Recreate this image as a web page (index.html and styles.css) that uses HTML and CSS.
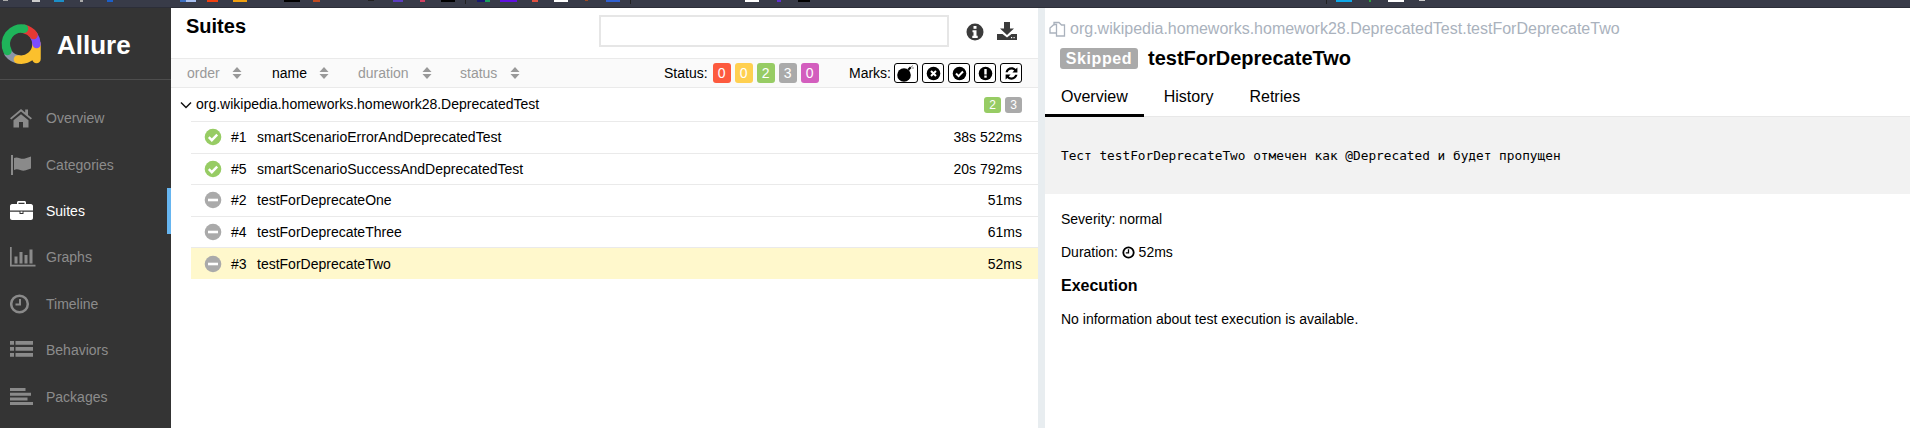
FILE: index.html
```html
<!DOCTYPE html>
<html lang="en">
<head>
<meta charset="utf-8">
<title>Allure</title>
<link rel="stylesheet" href="styles.css">
</head>
<body>
<svg class="defs" width="0" height="0" aria-hidden="true">
  <symbol id="sort" viewBox="0 0 10 12"><path class="sort-up" d="M5 0l4.5 5H.5z"/><path class="sort-down" d="M.5 7h9L5 12z"/></symbol>
  <symbol id="passed" viewBox="0 0 18 18"><circle cx="9" cy="9" r="8.3" fill="#97cc64"/><path d="M4.8 9.2l3 3 5.4-5.6" fill="none" stroke="#fff" stroke-width="2.4"/></symbol>
  <symbol id="skipped" viewBox="0 0 18 18"><circle cx="9" cy="9" r="8.3" fill="#aaa"/><rect x="4" y="7.7" width="10" height="2.6" fill="#fff"/></symbol>
</svg>
<div class="app">
  <div class="topbar">
    <svg class="specks" width="1910" height="8" aria-hidden="true">
      <rect x="3" width="5" height="1" fill="#aaa"/><rect x="32" width="8" height="2" fill="#ccc"/><rect x="54" width="10" height="2" fill="#1c8fc8"/><rect x="80" width="3" height="2" fill="#aaa"/><rect x="107" width="6" height="2" fill="#1c5fc8"/><rect x="180" width="6" height="2" fill="#3d6fc0"/><rect x="186" width="10" height="2" fill="#a8c0f0"/><rect x="207" width="11" height="2" fill="#f0400f"/><rect x="233" width="14" height="2" fill="#f0a010"/><rect x="284" width="16" height="2" fill="#000"/><rect x="313" width="7" height="2" fill="#c04a20"/><rect x="368" width="6" height="1" fill="#222"/><rect x="393" width="10" height="2" fill="#5b3dc0"/><rect x="420" width="5" height="2" fill="#d04060"/><rect x="441" width="14" height="2" fill="#000"/><rect x="465" width="1" height="4" fill="#222"/><rect x="477" width="8" height="2" fill="#1a1a70"/><rect x="485" width="5" height="2" fill="#1aa060"/><rect x="500" width="17" height="2" fill="#6010e0"/><rect x="532" width="6" height="2" fill="#e05040"/><rect x="554" width="14" height="2" fill="#fff"/><rect x="585" width="3" height="1" fill="#a04a20"/><rect x="606" width="14" height="2" fill="#3060d0"/><rect x="630" width="1" height="4" fill="#222"/><rect x="745" width="14" height="2" fill="#fff"/><rect x="777" width="4" height="2" fill="#6030d0"/><rect x="798" width="12" height="2" fill="#000"/><rect x="1326" width="1" height="4" fill="#222"/><rect x="1336" width="16" height="2" fill="#10a8e8"/><rect x="1369" width="2" height="2" fill="#30a040"/><rect x="1388" width="16" height="2" fill="#fff"/><rect x="1419" width="6" height="1" fill="#ccc"/>
    </svg>
  </div>
  <div class="main">
    <aside class="side">
      <div class="brand">
        <svg class="logo" width="42" height="42" viewBox="0 0 42 42" aria-hidden="true">
          <g fill="none" stroke-width="8.5" stroke-linecap="round" stroke-linejoin="round">
            <path stroke="#8d96a8" d="M19 36.4A15.5 15.5 0 0 1 8.5 30.5"/>
            <path stroke="#fbc02d" d="M18 36.4A15.5 15.5 0 0 0 36.5 21V36"/>
            <path stroke="#7c4dff" d="M33.8 12.6A15.5 15.5 0 0 1 36.5 21"/>
            <path stroke="#e53935" d="M24 6A15.5 15.5 0 0 1 33.5 12"/>
            <path stroke="#1fb45a" d="M7.5 28A15.5 15.5 0 0 1 24 5.8"/>
          </g>
        </svg>
        <span class="brand-name">Allure</span>
      </div>
      <nav class="nav">
        <a class="nav-item"><svg class="nav-icon" width="22" height="20" viewBox="0 0 22 20"><path d="M11 1L0 10.2l1.3 1.4L11 3.6l9.7 8 1.3-1.4-4-3.3V1.500h-2.800v3L11 1zM3.500 12.300V19.500h5.500v-5.500h4v5.500h5.500v-7.200L11 6.200z"/></svg><span>Overview</span></a>
        <a class="nav-item"><svg class="nav-icon" width="22" height="20" viewBox="0 0 22 20"><path d="M1 0h2v20H1zM4 3c4-2 7 2 11 .500 2-.800 4-1.500 6-2v12c-2 .500-4 1.500-6 2-4 1-7-3-11-.500z"/></svg><span>Categories</span></a>
        <a class="nav-item active"><svg class="nav-icon" width="23" height="20" viewBox="0 0 23 20"><path d="M7 3V1.500C7 .700 7.700 0 8.500 0h6C15.300 0 16 .700 16 1.500V3h5c1 0 2 1 2 2v4.500H0V5c0-1 1-2 2-2zM8.500 1.700V3h6V1.700zM0 10.800h9.500V13h4v-2.200H23V17c0 1-1 2-2 2H2c-1 0-2-1-2-2zM10.500 10.500h2V12h-2z"/></svg><span>Suites</span></a>
        <a class="nav-item"><svg class="nav-icon" width="26" height="20" viewBox="0 0 26 20"><path d="M0 0h1.700v17.800H25.500v1.700H0zM4.500 9.500h3v7h-3zM9.500 5h3v11.500h-3zM14.500 8h3v8.500h-3zM19.500 2.500h3v14h-3z"/></svg><span>Graphs</span></a>
        <a class="nav-item"><svg class="nav-icon" width="22" height="20" viewBox="0 0 22 20"><circle cx="9.500" cy="10" r="8.300" fill="none" stroke="#8a8a8a" stroke-width="2.500"/><path d="M9 5h2v6.500H5.500v-2H9z"/></svg><span>Timeline</span></a>
        <a class="nav-item"><svg class="nav-icon" width="23" height="20" viewBox="0 0 23 20"><path d="M0 1h4v3.700H0zM5.500 1H23v3.700H5.500zM0 7h4v3.700H0zM5.500 7H23v3.700H5.500zM0 13h4v3.700H0zM5.500 13H23v3.700H5.500z"/></svg><span>Behaviors</span></a>
        <a class="nav-item"><svg class="nav-icon" width="23" height="20" viewBox="0 0 23 20"><path d="M0 1h15.500v3H0zM0 5.700h21v3H0zM0 10.400h17.500v3H0zM0 15.100h23v3H0z"/></svg><span>Packages</span></a>
      </nav>
    </aside>

    <section class="suites">
      <header class="suites-head">
        <h2 class="suites-title">Suites</h2>
        <input class="search" type="text" aria-label="Search">
        <svg class="head-icon info" width="18" height="18" viewBox="0 0 18 18"><circle cx="9" cy="9" r="8.500" fill="#3b3b3b"/><rect x="7.500" y="3" width="3" height="2.800" fill="#fff"/><path d="M6.500 7.200h4v5.500h1.200v2.200H6.300v-2.200h1.200V9.300h-1z" fill="#fff"/></svg>
        <svg class="head-icon download" width="20" height="18" viewBox="0 0 20 18"><path d="M7 0h6v6.500h4L10 13 3 6.500h4z" fill="#3b3b3b"/><path d="M0 12h5.500L10 15.500 14.500 12H20v6H0z" fill="#3b3b3b"/><rect x="14" y="15" width="1.200" height="1.200" fill="#fff"/><rect x="16.500" y="15" width="1.200" height="1.200" fill="#fff"/></svg>
      </header>

      <div class="toolbar">
        <div class="sorters">
          <div class="sorter s-order">order<svg class="sort-icon" width="10" height="12"><use href="#sort"/></svg></div>
          <div class="sorter s-name on">name<svg class="sort-icon" width="10" height="12"><use href="#sort"/></svg></div>
          <div class="sorter s-duration">duration<svg class="sort-icon" width="10" height="12"><use href="#sort"/></svg></div>
          <div class="sorter s-status">status<svg class="sort-icon" width="10" height="12"><use href="#sort"/></svg></div>
        </div>
        <div class="status-filter">
          <span class="filter-label">Status:</span>
          <span class="pill red">0</span><span class="pill yellow">0</span><span class="pill green">2</span><span class="pill grey">3</span><span class="pill pink">0</span>
        </div>
        <div class="marks">
          <span class="filter-label marks-label">Marks:</span>
          <button class="mark wide"><svg width="20" height="18" viewBox="0 0 20 18"><circle cx="8" cy="11" r="6.800" fill="#000"/><path d="M11.500 5l2.500-2.500 1.500 1.500L13 6.500z" fill="#000"/><path d="M15 3l2-1.500M16 4h2" stroke="#888" stroke-width="1"/></svg></button>
          <button class="mark"><svg width="15" height="15" viewBox="0 0 15 15"><circle cx="7.500" cy="7.500" r="6.800" fill="#000"/><path d="M5 5l5 5M10 5l-5 5" stroke="#fff" stroke-width="2"/></svg></button>
          <button class="mark"><svg width="15" height="15" viewBox="0 0 15 15"><circle cx="7.500" cy="7.500" r="6.800" fill="#000"/><path d="M4 7.500l2.600 2.600 4.400-4.600" fill="none" stroke="#fff" stroke-width="2"/></svg></button>
          <button class="mark"><svg width="15" height="15" viewBox="0 0 15 15"><circle cx="7.500" cy="7.500" r="6.800" fill="#000"/><rect x="6.300" y="3" width="2.400" height="5.500" fill="#fff"/><rect x="6.300" y="9.500" width="2.400" height="2.200" fill="#fff"/></svg></button>
          <button class="mark"><svg width="15" height="15" viewBox="0 0 15 15"><path d="M1.500 6.200C2.200 3.200 4.600 1.300 7.500 1.300c1.700 0 3.100.600 4.200 1.700L13.400 1.400v5H8.400l1.800-1.800c-.700-.700-1.700-1.100-2.700-1.100-1.700 0-3.200 1.100-3.700 2.700zM1.600 8.600h5L4.800 10.400c.700.700 1.700 1.100 2.700 1.100 1.700 0 3.200-1.100 3.700-2.700h2.300c-.700 3-3.100 4.900-6 4.900-1.700 0-3.100-.600-4.200-1.700L1.600 13.600z" fill="#000"/></svg></button>
        </div>
      </div>

      <div class="group">
        <svg class="chevron" width="12" height="8" viewBox="0 0 12 8"><path d="M1 1.500l5 5 5-5" fill="none" stroke="#111" stroke-width="1.500"/></svg>
        <span class="group-name">org.wikipedia.homeworks.homework28.DeprecatedTest</span>
        <span class="pill small green">2</span><span class="pill small grey">3</span>
      </div>

      <ul class="rows">
        <li class="row"><svg class="status" width="18" height="18"><use href="#passed"/></svg><span class="num">#1</span><span class="name">smartScenarioErrorAndDeprecatedTest</span><span class="time">38s 522ms</span></li>
        <li class="row"><svg class="status" width="18" height="18"><use href="#passed"/></svg><span class="num">#5</span><span class="name">smartScenarioSuccessAndDeprecatedTest</span><span class="time">20s 792ms</span></li>
        <li class="row"><svg class="status" width="18" height="18"><use href="#skipped"/></svg><span class="num">#2</span><span class="name">testForDeprecateOne</span><span class="time">51ms</span></li>
        <li class="row"><svg class="status" width="18" height="18"><use href="#skipped"/></svg><span class="num">#4</span><span class="name">testForDeprecateThree</span><span class="time">61ms</span></li>
        <li class="row selected"><svg class="status" width="18" height="18"><use href="#skipped"/></svg><span class="num">#3</span><span class="name">testForDeprecateTwo</span><span class="time">52ms</span></li>
      </ul>
    </section>

    <div class="gutter"></div>

    <section class="detail">
      <div class="crumb">
        <svg class="copy" width="17" height="16" viewBox="0 0 17 16"><path d="M5 4.500V1.500h5l2.500 2.500h3v11h-8v-3.500M1 7l4-3.500h2.500V12h-6.500z" fill="none" stroke="#aab2bd" stroke-width="1.300"/></svg>
        <span>org.wikipedia.homeworks.homework28.DeprecatedTest.testForDeprecateTwo</span>
      </div>
      <div class="title-line">
        <span class="badge">Skipped</span>
        <h2 class="test-title">testForDeprecateTwo</h2>
      </div>
      <div class="tabs">
        <a class="tab active">Overview</a>
        <a class="tab">History</a>
        <a class="tab">Retries</a>
      </div>
      <pre class="description">Тест testForDeprecateTwo отмечен как @Deprecated и будет пропущен</pre>
      <div class="info-body">
        <p class="line">Severity: normal</p>
        <p class="line">Duration: <svg class="clock" width="13" height="13" viewBox="0 0 13 13"><circle cx="6.500" cy="6.500" r="5.200" fill="none" stroke="#000" stroke-width="1.800"/><path d="M6.500 3.200v3.600H3.800" fill="none" stroke="#000" stroke-width="1.300"/></svg> 52ms</p>
        <h3 class="section">Execution</h3>
        <p class="line">No information about test execution is available.</p>
      </div>
    </section>
  </div>
</div>
</body>
</html>
```

FILE: styles.css
```css
* { box-sizing: border-box; }
html, body { margin: 0; padding: 0; height: 100%; overflow: hidden; }
body { font-family: "Liberation Sans", Arial, sans-serif; font-size: 14px; color: #000; background: #fff; }
.defs { position: absolute; }
.app { display: flex; flex-direction: column; height: 100vh; }
.topbar { height: 8px; flex: none; background: #383b48; border-bottom: 1px solid #2c2e38; }
.specks { display: block; }
.main { flex: 1; display: flex; min-height: 0; }

.side { width: 171px; flex: none; background: #343434; }
.brand { height: 72px; display: flex; align-items: center; border-bottom: 1px solid #4d4d4d; }
.logo { flex: none; }
.brand-name { margin: 3px 0 0 15px; font-size: 26px; font-weight: 700; color: #fff; }
.nav { margin-top: 15px; display: flex; flex-direction: column; }
.nav-item { height: 46.4px; display: flex; align-items: center; padding-left: 10px; color: #8c8c8c; fill: #8a8a8a; border-right: 4px solid transparent; }
.nav-item span { margin-left: auto; width: 121px; font-size: 14px; }
.nav-icon { flex: none; }
.nav-item.active { color: #fff; fill: #fff; border-right-color: #66b5f0; }

.suites { width: 867px; flex: none; display: flex; flex-direction: column; }
.suites-head { height: 51px; flex: none; display: flex; align-items: flex-start; border-bottom: 1px solid #eaeaea; }
.suites-title { margin: 6px 0 0 15px; width: 413px; font-size: 20px; line-height: 24px; font-weight: 700; }
.search { margin-top: 7px; width: 350px; height: 32px; border: 2px solid #e6e6e6; background: #fff; outline: none; }
.head-icon { flex: none; }
.info { margin: 15px 0 0 17px; }
.download { margin: 14px 0 0 13px; }

.toolbar { height: 29px; flex: none; display: flex; align-items: center; background: #fafafa; border-bottom: 1px solid #eaeaea; }
.sorters { display: flex; align-items: center; width: 478px; }
.sorter { display: flex; align-items: center; justify-content: space-between; color: #999; font-size: 14px; }
.sort-icon { flex: none; }
.sort-up, .sort-down { fill: #999; }
.on { color: #000; }
.on .sort-up { fill: #000; }
.s-order { margin-left: 16px; width: 55px; }
.s-name { margin-left: 30px; width: 57px; }
.s-duration { margin-left: 29px; width: 74px; }
.s-status { margin-left: 28px; width: 60px; }
.status-filter, .marks { display: flex; align-items: center; gap: 4px; }
.status-filter { margin-left: 15px; width: 185px; }
.filter-label { margin-right: 1px; font-size: 14px; }
.filter-label.marks-label { margin-right: -1px; }
.pill { display: block; width: 18px; height: 20px; line-height: 20px; text-align: center; color: #fff; border-radius: 3px; font-size: 14px; }
.red { background: #fd5a3e; }
.yellow { background: #ffd050; }
.green { background: #97cc64; }
.grey { background: #aaa; }
.pink { background: #d35ebe; }
.mark { width: 22px; height: 20px; padding: 0; display: flex; align-items: center; justify-content: center; background: #fff; border: 1px solid #000; border-radius: 3px; }
.mark.wide { width: 24px; }

.group { height: 33px; flex: none; display: flex; align-items: center; padding-right: 16px; gap: 4px; }
.chevron { margin-left: 9px; flex: none; }
.group-name { flex: 1; font-size: 14px; position: relative; top: -1px; }
.pill.small { width: 17px; height: 16px; line-height: 16px; font-size: 12px; }

.rows { list-style: none; margin: 0 0 0 20px; padding: 0; }
.row { height: 31.6px; display: flex; align-items: center; padding: 0 16px 0 13px; border-top: 1px solid #eaeaea; }
.row.selected { background: #fff8cc; }
.status { flex: none; }
.num { margin-left: 9px; width: 26px; font-size: 14px; }
.name { flex: 1; font-size: 14px; }
.time { font-size: 14px; }

.gutter { width: 7px; flex: none; background: #e8edf0; }
.detail { flex: 1; min-width: 0; display: flex; flex-direction: column; }
.crumb { height: 31px; flex: none; margin-top: 5px; display: flex; align-items: center; padding-left: 4px; color: #aab2bd; font-size: 16px; }
.copy { flex: none; margin-right: 4px; }
.title-line { height: 28px; flex: none; display: flex; align-items: center; padding-left: 15px; }
.badge { width: 78px; height: 21px; line-height: 21px; text-align: center; background: #aaa; color: #fff; font-weight: 700; font-size: 16px; letter-spacing: .6px; border-radius: 3px; }
.test-title { margin: 0 0 0 10px; font-size: 20px; font-weight: 700; }
.tabs { height: 45px; flex: none; display: flex; align-items: flex-end; gap: 4px; border-bottom: 1px solid #e8e8e8; }
.tab { padding: 0 16px; height: 38px; line-height: 36px; font-size: 16px; border-bottom: 3px solid transparent; margin-bottom: -1px; }
.tab.active { border-bottom-color: #000; }
.description { margin: 0; height: 77px; flex: none; padding: 0 16px; line-height: 77px; background: #f2f2f2; font-family: "DejaVu Sans Mono", monospace; font-size: 12.78px; }
.info-body { padding: 0 16px; }
.line { margin: 0; height: 33px; line-height: 33px; font-size: 14px; }
.info-body .line:first-child { margin-top: 9px; }
.clock { vertical-align: -2px; }
.section { margin: 0; height: 34px; line-height: 34px; font-size: 16px; font-weight: 700; }
```
